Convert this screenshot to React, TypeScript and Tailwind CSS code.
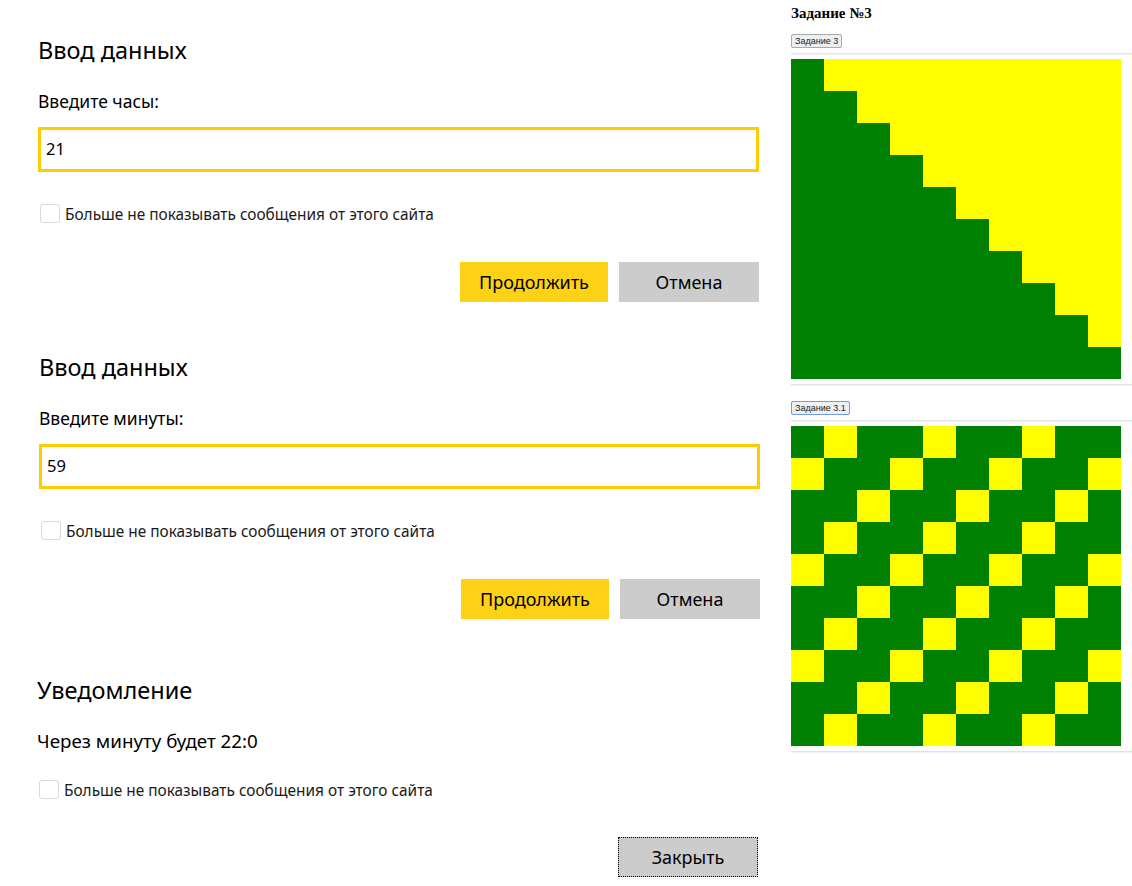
import React from 'react';

const uiFont = { fontFamily: '"Noto Sans", "Open Sans", sans-serif' };

const GREEN = '#008000';
const YELLOW = '#ffff00';

type Grid = (r: number, c: number) => boolean;

const staircase: Grid = (r, c) => c <= r;
const checker: Grid = (r, c) => (r + c) % 3 !== 1;

const Pattern = ({ isGreen }: { isGreen: Grid }) => {
  const cells = [];
  for (let r = 0; r < 10; r++) {
    for (let c = 0; c < 10; c++) {
      cells.push(
        <rect
          key={`${r}-${c}`}
          x={c * 33}
          y={r * 32}
          width={33}
          height={32}
          fill={isGreen(r, c) ? GREEN : YELLOW}
        />
      );
    }
  }
  return (
    <svg width={330} height={320} viewBox="0 0 330 320" className="block" shapeRendering="crispEdges">
      {cells}
    </svg>
  );
};

const Checkbox = () => (
  <div className="ml-[2px] flex h-5 items-center gap-[5px]">
    <span className="block h-[19px] w-5 shrink-0 rounded-[3px] border border-[#d9d9d9] bg-white" />
    <span className="pt-[4px] text-[15.4px] text-[#1a1a1a]">Больше не показывать сообщения от этого сайта</span>
  </div>
);

const Title = ({ children }: { children: React.ReactNode }) => (
  <h2 className="text-[23.5px] leading-[28px] text-black">{children}</h2>
);

const PromptDialog = ({ label, value, className }: { label: string; value: string; className?: string }) => (
  <div className={`flex w-[721px] flex-col ${className ?? ''}`}>
    <Title>Ввод данных</Title>
    <p className="mt-[25px] text-[17.5px] leading-6 text-black">{label}</p>
    <div className="mt-[14px] flex h-[45px] items-center border-[3px] border-[#ffcc00] pl-[5px] text-[16.5px] text-black">
      {value}
    </div>
    <div className="mt-[31px]">
      <Checkbox />
    </div>
    <div className="mt-[39px] flex justify-end gap-[11px]">
      <button className="h-10 w-[148px] bg-[#fcd116] text-[18px] text-black">Продолжить</button>
      <button className="h-10 w-[140px] bg-[#cccccc] text-[18px] text-black">Отмена</button>
    </div>
  </div>
);

const Hr = () => <div className="h-[2px] w-full border-t border-[#e3e3e3] bg-[#f2f2f2]" />;

const TaskButton = ({ children, focused }: { children: React.ReactNode; focused?: boolean }) => (
  <button
    className={`block h-[14px] rounded-[2px] border px-[3px] text-[9px] leading-[12px] text-[#222] ${
      focused ? 'border-[#6e9be6] bg-[#eef0f4]' : 'border-[#a9a9a9] bg-[#efefef]'
    }`}
    style={{ fontFamily: '"Liberation Sans", Arial, sans-serif' }}
  >
    {children}
  </button>
);

export default function App() {
  return (
    <div className="flex min-h-[886px] w-[1132px] bg-white">
      <div className="flex w-[791px] flex-col pl-[38px] pt-[36px]" style={uiFont}>
        <PromptDialog label="Введите часы:" value="21" />
        <PromptDialog label="Введите минуты:" value="59" className="ml-px mt-[51px]" />
        <div className="-ml-px mt-[57px] flex w-[721px] flex-col">
          <Title>Уведомление</Title>
          <p className="mt-[25px] text-[18.8px] leading-6 text-black">Через минуту будет 22:0</p>
          <div className="mt-[26px]">
            <Checkbox />
          </div>
          <div className="mt-[38px] flex justify-end">
            <button className="h-10 w-[140px] border border-dotted border-black bg-[#cccccc] text-[18px] text-black">
              Закрыть
            </button>
          </div>
        </div>
      </div>

      <div className="flex flex-1 flex-col pt-[4px]">
        <h3
          className="text-[15px] font-bold leading-[18px] text-black"
          style={{ fontFamily: '"Liberation Serif", "Times New Roman", serif' }}
        >
          Задание №3
        </h3>
        <div className="mt-[12px] flex">
          <TaskButton>Задание 3</TaskButton>
        </div>
        <div className="mt-[5px] flex">
          <Hr />
        </div>
        <div className="mt-[4px] flex">
          <Pattern isGreen={staircase} />
        </div>
        <div className="mt-[5px] flex">
          <Hr />
        </div>
        <div className="mt-[15px] flex">
          <TaskButton focused>Задание 3.1</TaskButton>
        </div>
        <div className="mt-[5px] flex">
          <Hr />
        </div>
        <div className="mt-[4px] flex">
          <Pattern isGreen={checker} />
        </div>
        <div className="mt-[5px] flex">
          <Hr />
        </div>
      </div>
    </div>
  );
}
